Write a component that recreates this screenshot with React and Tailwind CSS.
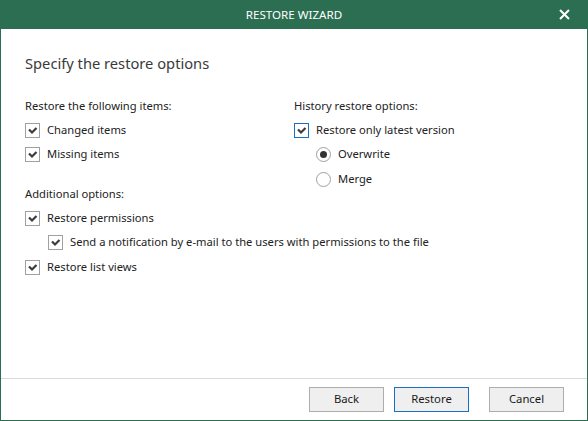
import { useState } from 'react';

const FONT = { fontFamily: '"Segoe UI", "Noto Sans", sans-serif' };

function Check({ checked, focused }) {
  return (
    <span
      className={`w-[15px] h-[15px] shrink-0 border bg-white flex items-center justify-center ${
        focused ? 'border-[#1a6fc4]' : 'border-[#a0a0a0]'
      }`}
    >
      {checked && (
        <svg width="11" height="11" viewBox="0 0 11 11">
          <path d="M2 4.5 L5 7.5 L9.5 3" fill="none" stroke="#3c3c3c" strokeWidth="2.2" />
        </svg>
      )}
    </span>
  );
}

function CheckRow({ label, checked, focused, onClick, className = 'h-[24px]' }) {
  return (
    <div className={`flex items-center gap-[7px] cursor-default ${className}`} onClick={onClick}>
      <Check checked={checked} focused={focused} />
      <span>{label}</span>
    </div>
  );
}

function Radio({ label, selected, onClick, className = 'h-[24px]' }) {
  return (
    <div className={`flex items-center gap-[7px] cursor-default ${className}`} onClick={onClick}>
      <span className="w-[15px] h-[15px] shrink-0 rounded-full border border-[#a0a0a0] bg-white flex items-center justify-center">
        {selected && <span className="w-[7px] h-[7px] rounded-full bg-[#333]" />}
      </span>
      <span>{label}</span>
    </div>
  );
}

function Button({ children, primary }) {
  return (
    <button
      className={`w-[75px] h-[25px] bg-[#efefef] border text-[11.3px] text-[#1a1a1a] ${
        primary ? 'border-[#1a6fc4]' : 'border-[#adadad]'
      }`}
    >
      {children}
    </button>
  );
}

export default function App() {
  const [opts, setOpts] = useState({
    changed: true,
    missing: true,
    latest: true,
    perms: true,
    notify: true,
    views: true,
  });
  const [mode, setMode] = useState('overwrite');
  const toggle = k => () => setOpts(o => ({ ...o, [k]: !o[k] }));

  return (
    <div className="w-[588px] h-[421px] flex flex-col bg-white text-[11.2px] text-[#222]" style={FONT}>
      <div className="h-[29px] shrink-0 bg-[#2b6e51] flex items-center justify-center relative text-white text-[11.6px]">
        RESTORE WIZARD
        <svg className="absolute left-[559px] top-[9px]" width="11" height="11" viewBox="0 0 11 11">
          <path d="M1 1 L10 10 M10 1 L1 10" stroke="white" strokeWidth="2" />
        </svg>
      </div>

      <div className="flex-1 flex flex-col border-x border-b border-[#2b6e51]">
        <div className="flex-1 pl-[24px] pt-[24px]">
          <h1 className="text-[14.7px] leading-[20px] text-[#3a3a3a] font-normal">Specify the restore options</h1>

          <div className="grid grid-cols-[269px_1fr] mt-[21px]">
            <div>
              <div className="h-[24px] flex items-center">Restore the following items:</div>
              <CheckRow label="Changed items" checked={opts.changed} onClick={toggle('changed')} />
              <CheckRow label="Missing items" checked={opts.missing} onClick={toggle('missing')} />

              <div className="h-[24px] flex items-center mt-[16px]">Additional options:</div>
              <CheckRow label="Restore permissions" checked={opts.perms} onClick={toggle('perms')} />
              <div className="pl-[23px]">
                <CheckRow
                  label="Send a notification by e-mail to the users with permissions to the file"
                  checked={opts.notify}
                  onClick={toggle('notify')}
                  className="h-[25px] whitespace-nowrap"
                />
              </div>
              <CheckRow label="Restore list views" checked={opts.views} onClick={toggle('views')} className="h-[25px]" />
            </div>

            <div>
              <div className="h-[24px] flex items-center">History restore options:</div>
              <CheckRow label="Restore only latest version" checked={opts.latest} focused onClick={toggle('latest')} />
              <div className="pl-[22px]">
                <Radio label="Overwrite" selected={mode === 'overwrite'} onClick={() => setMode('overwrite')} className="h-[25px]" />
                <Radio label="Merge" selected={mode === 'merge'} onClick={() => setMode('merge')} />
              </div>
            </div>
          </div>
        </div>

        <div className="border-t border-[#d9d9d9] pt-[8px] pb-[8px] pr-[23px] flex justify-end">
          <Button>Back</Button>
          <div className="ml-[10px]">
            <Button primary>Restore</Button>
          </div>
          <div className="ml-[20px]">
            <Button>Cancel</Button>
          </div>
        </div>
      </div>
    </div>
  );
}
